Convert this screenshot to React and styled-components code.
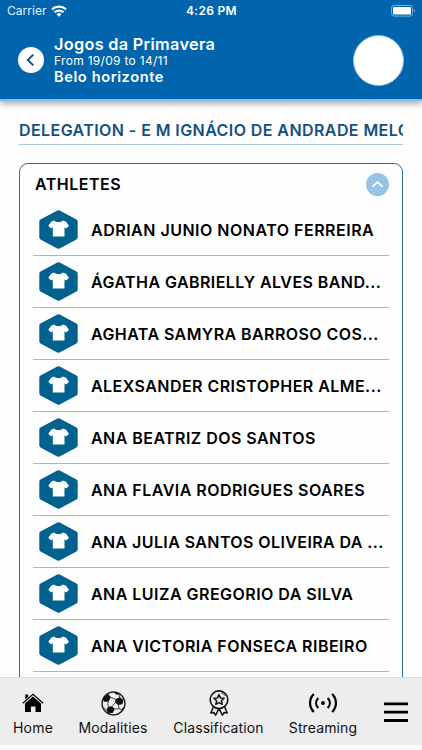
import React from "react";
import styled, { createGlobalStyle } from "styled-components";

const GlobalStyle = createGlobalStyle`
  * { box-sizing: border-box; }
  html, body { margin: 0; padding: 0; background: #fff; }
  body { font-family: Inter, "Liberation Sans", sans-serif; overflow: hidden; }
  svg { display: block; flex: none; }
`;

const Screen = styled.div`
  width: 422px;
  height: 750px;
  display: flex;
  flex-direction: column;
  overflow: hidden;
  background: #fefefe;
`;

const Header = styled.header`
  flex: none;
  height: 101px;
  background: #0165ae;
  border-bottom: 2px solid #8abbe6;
  box-shadow: 0 3px 6px rgba(0, 0, 0, 0.32);
  color: #fff;
`;

const StatusBar = styled.div`
  height: 21px;
  display: grid;
  grid-template-columns: 1fr auto 1fr;
  align-items: center;
  padding: 1px 6px 0 7px;
`;

const Carrier = styled.div`
  display: flex;
  align-items: center;
  gap: 4px;
  font-size: 12px;
  line-height: 20px;
  letter-spacing: 0.05px;
  color: #e3f0fa;
`;

const Clock = styled.div`
  font-size: 12px;
  font-weight: 600;
  line-height: 20px;
  letter-spacing: 0.3px;
`;

const BatterySlot = styled.div`
  display: flex;
  justify-content: flex-end;
`;

const EventBar = styled.div`
  display: flex;
  align-items: center;
  height: 78px;
  padding: 0 18.500px 0 18px;
`;

const BackButton = styled.button`
  width: 26px;
  height: 26px;
  padding: 0;
  border: 0;
  border-radius: 50%;
  background: #fff;
  display: grid;
  place-items: center;
`;

const EventText = styled.div`
  flex: 1;
  margin-left: 10px;
  white-space: nowrap;
`;

const EventName = styled.div`
  font-size: 16.3px;
  font-weight: 600;
  line-height: 18px;
  letter-spacing: 0.3px;
`;

const EventDates = styled.div`
  font-size: 12px;
  line-height: 15px;
  font-weight: 400;
  letter-spacing: 0.3px;
`;

const EventCity = styled.div`
  font-size: 14.6px;
  font-weight: 600;
  line-height: 18px;
  letter-spacing: 0.6px;
`;

const Avatar = styled.div`
  width: 51px;
  height: 51px;
  border-radius: 50%;
  background: #fff;
  border: 1px solid #8dc3ec;
`;

const Content = styled.main`
  flex: 1;
  min-height: 0;
  overflow: hidden;
  padding: 19px 19px 0 19px;
`;

const PageTitle = styled.h1`
  margin: 0;
  height: 25px;
  border-bottom: 1px solid #a5cbe6;
  font-size: 16px;
  font-weight: 600;
  line-height: 20px;
  letter-spacing: 0.42px;
  color: #14507f;
  white-space: nowrap;
  overflow: hidden;
`;

const Card = styled.section`
  margin-top: 18px;
  height: 540px;
  border: 1px solid #2c6c9c;
  border-radius: 9px;
  padding: 0 13px;
`;

const CardHeader = styled.div`
  height: 40px;
  display: flex;
  justify-content: space-between;
  align-items: center;
  padding-left: 2px;
`;

const CardTitle = styled.h2`
  margin: 0;
  font-size: 16px;
  font-weight: 600;
  line-height: 20px;
  letter-spacing: 0.5px;
  color: #000;
`;

const Collapse = styled.button`
  width: 23px;
  height: 23px;
  padding: 0;
  border: 0;
  border-radius: 50%;
  background: #96c4e6;
  display: grid;
  place-items: center;
`;

const AthleteRow = styled.div`
  height: 52px;
  display: flex;
  align-items: center;
  padding-left: 6px;
  border-bottom: 1px solid #b4b4b4;
`;

const AthleteName = styled.div`
  margin-left: 13px;
  font-size: 16px;
  font-weight: 600;
  line-height: 20px;
  letter-spacing: ${(p) => p.$spacing}px;
  color: #000;
  white-space: nowrap;
`;

const TabBar = styled.nav`
  flex: none;
  height: 68px;
  display: grid;
  grid-template-columns: 66px 94px 117px 92px 53px;
  background: #ededed;
  border-top: 1px solid #dcdcdc;
`;

const Tab = styled.div`
  display: flex;
  flex-direction: column;
  align-items: center;
  padding-top: 10px;
  color: #111;
`;

const TabIcon = styled.div`
  height: 30px;
  display: flex;
  align-items: center;
`;

const TabLabel = styled.div`
  font-size: 14px;
  line-height: 20px;
  letter-spacing: ${(p) => p.$spacing}px;
  white-space: nowrap;
`;

const MenuButton = styled.div`
  padding: 24px 0 0 15px;
`;

const BottomInset = styled.div`
  flex: none;
  height: 5px;
  background: #fafafa;
`;

const WifiIcon = () => (
  <svg width="16" height="12" viewBox="0 0 16 12" fill="none" stroke="#fff" strokeWidth="2.200">
    <path d="M1 4.400a10.300 10.300 0 0 1 14 0" />
    <path d="M3.500 7.300a6.600 6.600 0 0 1 9 0" />
    <path d="M8 11.700 5.500 9.300a3.600 3.600 0 0 1 5 0z" fill="#fff" stroke="none" />
  </svg>
);

const BatteryIcon = () => (
  <svg width="25" height="12" viewBox="0 0 25 12">
    <rect x=".5" y=".5" width="21" height="10.600" rx="2.600" fill="none" stroke="#79b0da" />
    <rect x="2" y="2" width="18" height="7.600" rx="1.200" fill="#fff" />
    <path d="M23.200 4v3.600c1.300-.6 1.300-3 0-3.600z" fill="#79b0da" />
  </svg>
);

const JerseyIcon = () => (
  <svg width="39" height="39" viewBox="0 0 39 39">
    <path d="M18.300.6q1.200-.6 2.400 0l16.800 9q1.200.6 1.200 1.900v16q0 1.300-1.200 1.900l-16.800 9q-1.200.6-2.400 0l-16.800-9Q.3 28.800.3 27.500v-16q0-1.300 1.200-1.900z" fill="#02628f" />
    <path d="M15.300 10.600c1.200 2.300 7.200 2.300 8.400 0l3.100.9 3.200 4.200-2.700 2.800-1.800-1.200v9.300H13.800v-9.300L12 18.500l-2.700-2.800 3.200-4.200z" fill="#fff" />
  </svg>
);

const HomeIcon = () => (
  <svg width="22" height="20" viewBox="0 0 22 20">
    <path d="M3.300 1.500h2.900v2.200L3.300 6.300z" fill="#000" />
    <path d="M.8 10.300 11 1.400l10.200 8.900" fill="none" stroke="#000" strokeWidth="1.200" />
    <path d="m11 3.600 8 7V19h-5.500v-5.600h-4.600V19H3v-8.400z" fill="#000" />
  </svg>
);

const BallIcon = () => (
  <svg width="25" height="25" viewBox="0 0 25 25">
    <circle cx="12.500" cy="12.500" r="11.400" fill="#f1f1f1" stroke="#222" strokeWidth="1.500" />
    <g fill="#111" stroke="#111" strokeWidth="1.100" strokeLinejoin="round">
      <path d="m3.800 5.600 3.300-2.100 2.200 2.800-2 3.600-4 .3-.7-1.900z" />
      <path d="m15.200 8.500 3.500-1.700 3.100 2.400-.8 3.600-3.800.6-2.600-2.200z" />
      <path d="m7.400 16.300 3.500-.5 2.200 2.300-1.700 3.400-3.500.3-1.700-2.300z" />
      <path d="m20.600 18.700 2.100-2.600-.6 2.600-2.100 2.300z" strokeWidth=".5" />
      <path d="m13.600 1.400 3.800 1.100.6 1.200-3.500-.7z" strokeWidth=".5" />
    </g>
    <path d="m9.300 6.300 5.900 2.200M7.300 9.900l-.5 3 .6 3.400M14.600 11.200l-3.700 4.600M18.700 6.800l-.5-2.900M17.200 13.400l1 4.300 2.400 1M13.100 18.100l5.100-.4M6.200 19.500l-3-2.600" fill="none" stroke="#333" strokeWidth=".9" />
  </svg>
);

const MedalIcon = () => (
  <svg width="22" height="26" viewBox="0 0 22 26" fill="none" stroke="#111" strokeWidth="1.500" strokeLinejoin="round">
    <circle cx="11" cy="9.700" r="8.800" strokeWidth="1.600" />
    <path d="m11 4.600 1.500 3.300 3.600.4-2.700 2.500.8 3.600-3.200-1.800-3.200 1.800.8-3.600-2.700-2.500 3.600-.4z" />
    <path d="M13.300 2.800a7.400 7.400 0 0 1 4.100 3.300" strokeWidth=".8" />
    <path d="m5.300 17-2.500 6 3-.5 1.800 2.600 3.200-6.300M16.700 17l2.500 6-3-.5-1.800 2.600-3.200-6.300" />
  </svg>
);

const StreamIcon = () => (
  <svg width="30" height="20" viewBox="0 0 30 20" fill="none" stroke="#000" strokeWidth="2.200">
    <path d="M5.800.9c-5 5.400-5 12.800 0 18.200M24.200.9c5 5.400 5 12.800 0 18.200M10.300 4.900c-2.900 3-2.900 7.200 0 10.200M19.700 4.900c2.900 3 2.900 7.200 0 10.200" />
    <circle cx="15" cy="10" r="2" fill="#000" stroke="none" />
  </svg>
);

const MenuIcon = () => (
  <svg width="25" height="21" viewBox="0 0 25 21">
    <path d="M0 1.900h24M0 10.200h24M0 18.500h24" stroke="#000" strokeWidth="2.800" />
  </svg>
);

const athletes = [
  { name: "ADRIAN JUNIO NONATO FERREIRA", spacing: 0.5 },
  { name: "ÁGATHA GABRIELLY ALVES BAND...", spacing: 0.43 },
  { name: "AGHATA SAMYRA BARROSO COS...", spacing: 0.42 },
  { name: "ALEXSANDER CRISTOPHER ALME...", spacing: 0.45 },
  { name: "ANA BEATRIZ DOS SANTOS", spacing: 0.45 },
  { name: "ANA FLAVIA RODRIGUES SOARES", spacing: 0.47 },
  { name: "ANA JULIA SANTOS OLIVEIRA DA ...", spacing: 0.4 },
  { name: "ANA LUIZA GREGORIO DA SILVA", spacing: 0.47 },
  { name: "ANA VICTORIA FONSECA RIBEIRO", spacing: 0.47 },
];

const tabs = [
  { label: "Home", Icon: HomeIcon, spacing: 0.2 },
  { label: "Modalities", Icon: BallIcon, spacing: 0.1 },
  { label: "Classification", Icon: MedalIcon, spacing: 0.1 },
  { label: "Streaming", Icon: StreamIcon, spacing: 0.12 },
];

export default function App() {
  return (
    <Screen>
      <GlobalStyle />
      <Header>
        <StatusBar>
          <Carrier>Carrier <WifiIcon /></Carrier>
          <Clock>4:26 PM</Clock>
          <BatterySlot><BatteryIcon /></BatterySlot>
        </StatusBar>
        <EventBar>
          <BackButton aria-label="Back">
            <svg width="26" height="26" viewBox="0 0 26 26" fill="none" stroke="#14507f" strokeWidth="2">
              <path d="m15.300 7.600-5.500 5.400 5.500 5.400" />
            </svg>
          </BackButton>
          <EventText>
            <EventName>Jogos da Primavera</EventName>
            <EventDates>From 19/09 to 14/11</EventDates>
            <EventCity>Belo horizonte</EventCity>
          </EventText>
          <Avatar />
        </EventBar>
      </Header>
      <Content>
        <PageTitle>DELEGATION - E M IGNÁCIO DE ANDRADE MELO</PageTitle>
        <Card>
          <CardHeader>
            <CardTitle>ATHLETES</CardTitle>
            <Collapse aria-label="Collapse">
              <svg width="23" height="23" viewBox="0 0 23 23" fill="none" stroke="#fff" strokeWidth="1.800">
                <path d="m6.500 13.600 5-4.500 5 4.500" />
              </svg>
            </Collapse>
          </CardHeader>
          {athletes.map(({ name, spacing }) => (
            <AthleteRow key={name}>
              <JerseyIcon />
              <AthleteName $spacing={spacing}>{name}</AthleteName>
            </AthleteRow>
          ))}
        </Card>
      </Content>
      <TabBar>
        {tabs.map(({ label, Icon, spacing }) => (
          <Tab key={label}>
            <TabIcon><Icon /></TabIcon>
            <TabLabel $spacing={spacing}>{label}</TabLabel>
          </Tab>
        ))}
        <MenuButton><MenuIcon /></MenuButton>
      </TabBar>
      <BottomInset />
    </Screen>
  );
}
